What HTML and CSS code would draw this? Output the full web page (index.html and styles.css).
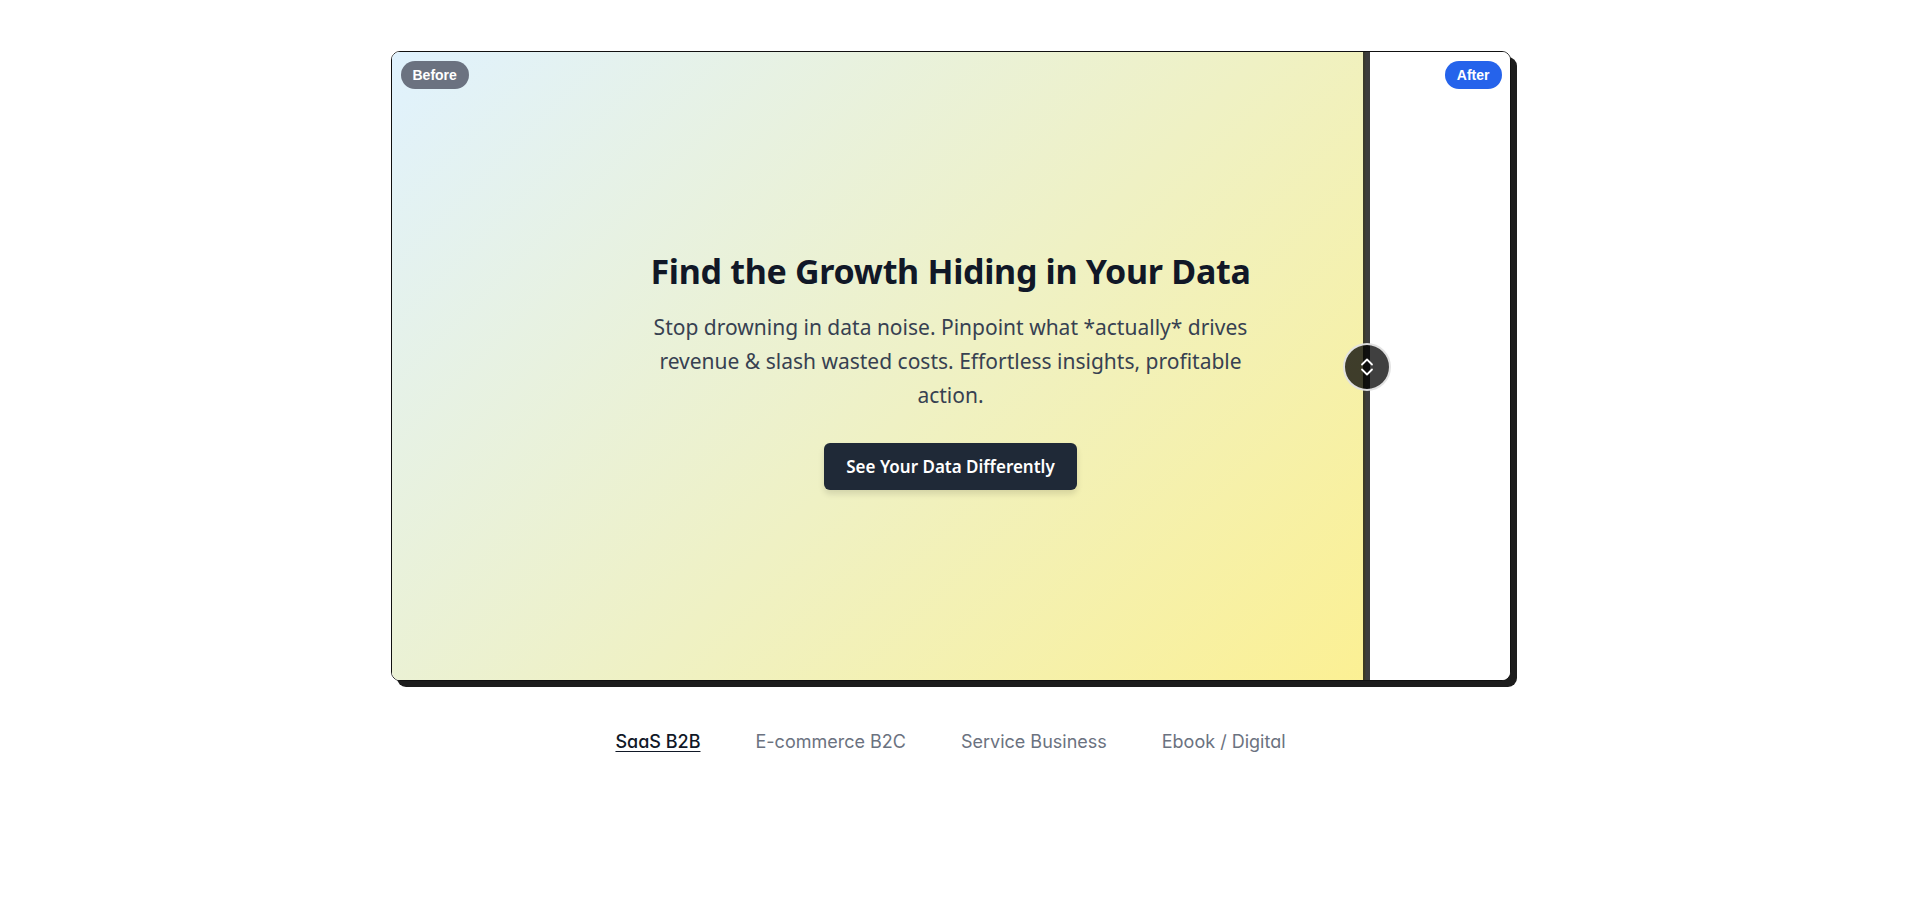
FILE: index.html
```html
<!DOCTYPE html>
<html lang="en">
<head>
<meta charset="utf-8">
<title>Before / After</title>
<link rel="stylesheet" href="styles.css">
</head>
<body>
<main class="page">
  <section class="compare">
    <div class="layer after-layer">
      <span class="pill pill-after">After</span>
    </div>
    <div class="layer before-layer">
      <div class="hero">
        <h1 class="hero-title">Find the Growth Hiding in Your Data</h1>
        <p class="hero-text">Stop drowning in data noise. Pinpoint what *actually* drives revenue &amp; slash wasted costs. Effortless insights, profitable action.</p>
        <button class="hero-btn" type="button">See Your Data Differently</button>
      </div>
      <span class="pill pill-before">Before</span>
    </div>
    <div class="divider">
      <div class="handle">
        <svg width="14" height="20" viewBox="0 0 14 20" fill="none" stroke="#ffffff" stroke-width="1.8" stroke-linecap="round" stroke-linejoin="round">
          <path d="M2 7.5 L7 2.5 L12 7.5"/>
          <path d="M2 12.5 L7 17.5 L12 12.5"/>
        </svg>
      </div>
    </div>
  </section>
  <nav class="tabs">
    <a class="tab tab-active">SaaS B2B</a>
    <a class="tab">E-commerce B2C</a>
    <a class="tab">Service Business</a>
    <a class="tab">Ebook / Digital</a>
  </nav>
</main>
</body>
</html>
```

FILE: styles.css
```css
html {
  overflow-y: scroll;
}
body {
  margin: 0;
  background: #ffffff;
  font-family: "Noto Sans", "Open Sans", sans-serif;
}
.page {
  display: flex;
  flex-direction: column;
  align-items: center;
  padding-top: 51px;
  padding-right: 19px;
}
.compare {
  position: relative;
  width: 1120px;
  height: 630px;
  box-sizing: border-box;
  border: 1px solid #111111;
  border-radius: 9px;
  box-shadow: 6px 6px 0 #1c1c1c;
  background: #ffffff;
  overflow: hidden;
}
.layer {
  position: absolute;
  inset: 0;
}
.after-layer {
  background: #ffffff;
}
.before-layer {
  background: linear-gradient(135deg, #e0f2fe 0%, #fef08a 100%);
  clip-path: inset(0 12.9% 0 0);
  display: flex;
  align-items: center;
  justify-content: center;
}
.hero {
  display: flex;
  flex-direction: column;
  align-items: center;
  text-align: center;
  margin-top: 8px;
}
.hero-title {
  margin: 0;
  font-size: 34px;
  line-height: 40px;
  font-weight: 700;
  letter-spacing: -0.3px;
  color: #111827;
}
.hero-text {
  margin: 19px 0 0;
  max-width: 604px;
  font-size: 21px;
  line-height: 34px;
  color: #374151;
}
.hero-btn {
  margin-top: 31px;
  height: 47px;
  padding: 0 22px;
  border: none;
  border-radius: 6px;
  background: #1f2937;
  color: #ffffff;
  font-family: inherit;
  font-size: 17px;
  font-weight: 600;
  box-shadow: 0 4px 6px rgba(0, 0, 0, 0.12);
}
.pill {
  position: absolute;
  top: 9px;
  height: 28px;
  padding: 0 12px;
  border-radius: 14px;
  font-family: "Liberation Sans", Arial, sans-serif;
  font-size: 14px;
  font-weight: 700;
  line-height: 28px;
  color: #ffffff;
}
.pill-before {
  left: 9px;
  background: #6b7280;
}
.pill-after {
  right: 8px;
  background: #2563eb;
}
.divider {
  position: absolute;
  top: 0;
  bottom: 0;
  left: 971px;
  width: 7px;
  background: rgba(0, 0, 0, 0.76);
}
.handle {
  position: absolute;
  top: 50%;
  left: 50%;
  width: 44px;
  height: 44px;
  margin: -23px 0 0 -23px;
  border: 2px solid rgba(255, 255, 255, 0.85);
  border-radius: 50%;
  background: rgba(0, 0, 0, 0.75);
  display: flex;
  align-items: center;
  justify-content: center;
}
.tabs {
  display: flex;
  gap: 55px;
  margin-top: 47px;
}
.tab {
  font-family: Inter, sans-serif;
  font-feature-settings: "cv11";
  font-size: 18px;
  line-height: 28px;
  color: #6b7280;
  cursor: pointer;
}
.tab-active {
  color: #111827;
  font-weight: 500;
  text-decoration: underline;
  text-underline-offset: 3px;
}
```
